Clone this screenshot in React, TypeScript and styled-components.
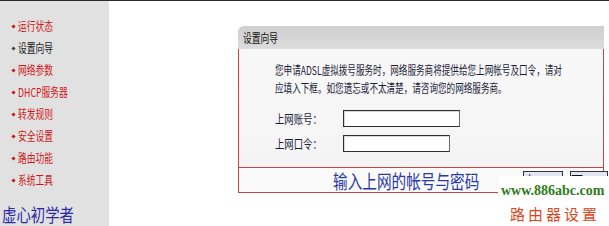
import React from "react";
import styled, { createGlobalStyle } from "styled-components";

const GlobalStyle = createGlobalStyle`
  html, body {
    margin: 0;
    padding: 0;
    background: #ffffff;
  }
  body {
    font-family: "Noto Sans CJK SC", "Liberation Sans", sans-serif;
    font-size: 12px;
    color: #1e1e2e;
  }
`;

const Page = styled.div`
  position: relative;
  width: 609px;
  height: 226px;
  overflow: hidden;
  display: flex;
  flex-direction: column;
`;

const TopRule = styled.div`
  height: 1px;
  background: #2a2a2a;
  flex: none;
`;

const Body = styled.div`
  flex: 1;
  display: flex;
`;

const Sidebar = styled.div`
  width: 109px;
  flex: none;
  background: #e1e1e1;
  padding-top: 14px;
  display: flex;
  flex-direction: column;
`;

const MenuItem = styled.div<{ $active?: boolean }>`
  height: 22px;
  display: flex;
  align-items: center;
  padding-left: 12px;
  gap: 3px;
  color: ${(p) => (p.$active ? "#1a1a1a" : "#d01818")};
  line-height: 1;
`;

const Bullet = styled.span<{ $active?: boolean }>`
  width: 3px;
  height: 3px;
  transform: rotate(45deg);
  background: ${(p) => (p.$active ? "#444" : "#c81818")};
  flex: none;
`;

const Squeeze = styled.span<{ $scale?: number }>`
  display: inline-block;
  white-space: nowrap;
  transform: scaleX(${(p) => p.$scale ?? 0.73});
  transform-origin: left center;
`;

const Signature = styled.div`
  margin-top: 12px;
  padding-left: 2px;
  font-size: 18px;
  line-height: 22px;
  color: #2a2aa8;
  font-weight: 400;
`;

const Main = styled.div`
  flex: 1;
  padding: 25px 5px 0 129px;
`;

const Panel = styled.div`
  width: 366px;
`;

const PanelHeader = styled.div`
  height: 23px;
  background: linear-gradient(#cfcfcf, #dcdcdc);
  border-top-left-radius: 6px;
  display: flex;
  align-items: center;
  padding-left: 5px;
  color: #111;
`;

const PanelBody = styled.div`
  height: 118px;
  box-sizing: border-box;
  border-left: 1px solid #c84444;
  border-right: 1px solid #c84444;
  background: linear-gradient(#f8f8f8, #f4f4f4);
  padding: 12px 0 0 36px;
  color: #1c1c38;
`;

const Notice = styled.div`
  line-height: 18px;
`;

const Fields = styled.div`
  margin-top: 12px;
  display: flex;
  flex-direction: column;
  gap: 7px;
`;

const FieldRow = styled.div`
  display: flex;
  align-items: center;
  height: 18px;
`;

const Label = styled.div`
  width: 68px;
  flex: none;
`;

const Input = styled.div<{ $w: number }>`
  width: ${(p) => p.$w}px;
  height: 17px;
  box-sizing: border-box;
  background: #ffffff;
  border: 1px solid #2e2e2e;
  border-right-color: #6a6a6a;
  box-shadow: inset 1px 1px 0 #d8d8d8;
`;

const PanelFooter = styled.div`
  height: 26px;
  box-sizing: border-box;
  border: 1px solid #c84444;
  background: #fafafa;
  display: flex;
  align-items: center;
  padding: 0 6px 0 94px;
`;

const Caption = styled.div`
  font-size: 19px;
  color: #2838a4;
  font-weight: 400;
  line-height: 1;
`;

const Buttons = styled.div`
  margin-left: auto;
  display: flex;
  gap: 7px;
  align-self: flex-start;
  margin-top: 3px;
`;

const Button = styled.div<{ $w: number }>`
  width: ${(p) => p.$w}px;
  height: 20px;
  box-sizing: border-box;
  border: 1px solid #333;
  background: #dfe6f2;
  display: flex;
  justify-content: center;
  align-items: flex-start;
  padding-top: 2px;
  font-size: 12px;
  line-height: 12px;
  letter-spacing: 4px;
  color: #111;
`;

const Watermark = styled.div`
  position: absolute;
  left: 498px;
  top: 176px;
  width: 111px;
  height: 50px;
  background: #ffffff;
  display: flex;
  flex-direction: column;
  align-items: flex-start;
  padding-left: 3px;
  box-sizing: border-box;
`;

const Site = styled.div`
  font-family: "Liberation Serif", "Times New Roman", serif;
  font-weight: bold;
  font-size: 14px;
  line-height: 18px;
  margin-top: 6px;
  color: #2f7d18;
`;

const SiteTitle = styled.div`
  margin-top: 5px;
  padding-left: 9px;
  font-size: 15px;
  letter-spacing: 3px;
  line-height: 18px;
  color: #e0461e;
  font-weight: 400;
`;

const menu = [
  { name: "运行状态" },
  { name: "设置向导", active: true },
  { name: "网络参数" },
  { name: "DHCP服务器" },
  { name: "转发规则" },
  { name: "安全设置" },
  { name: "路由功能" },
  { name: "系统工具" },
];

export default function App() {
  return (
    <Page>
      <GlobalStyle />
      <TopRule />
      <Body>
        <Sidebar>
          {menu.map((m) => (
            <MenuItem key={m.name} $active={m.active}>
              <Bullet $active={m.active} />
              <Squeeze>{m.name}</Squeeze>
            </MenuItem>
          ))}
          <Signature>
            <Squeeze $scale={0.8}>虚心初学者</Squeeze>
          </Signature>
        </Sidebar>
        <Main>
          <Panel>
            <PanelHeader>
              <Squeeze>设置向导</Squeeze>
            </PanelHeader>
            <PanelBody>
              <Notice>
                <Squeeze $scale={0.715}>您申请ADSL虚拟拨号服务时，网络服务商将提供给您上网帐号及口令，请对</Squeeze>
                <br />
                <Squeeze $scale={0.715}>应填入下框。如您遗忘或不太清楚，请咨询您的网络服务商。</Squeeze>
              </Notice>
              <Fields>
                <FieldRow>
                  <Label>
                    <Squeeze $scale={0.78}>上网账号：</Squeeze>
                  </Label>
                  <Input $w={117} />
                </FieldRow>
                <FieldRow>
                  <Label>
                    <Squeeze $scale={0.78}>上网口令：</Squeeze>
                  </Label>
                  <Input $w={107} />
                </FieldRow>
              </Fields>
            </PanelBody>
            <PanelFooter>
              <Caption>
                <Squeeze $scale={0.77}>输入上网的帐号与密码</Squeeze>
              </Caption>
              <Buttons>
                <Button $w={40}>上一步</Button>
                <Button $w={38}>下一步</Button>
              </Buttons>
            </PanelFooter>
          </Panel>
        </Main>
      </Body>
      <Watermark>
        <Site>www.886abc.com</Site>
        <SiteTitle>路由器设置</SiteTitle>
      </Watermark>
    </Page>
  );
}
